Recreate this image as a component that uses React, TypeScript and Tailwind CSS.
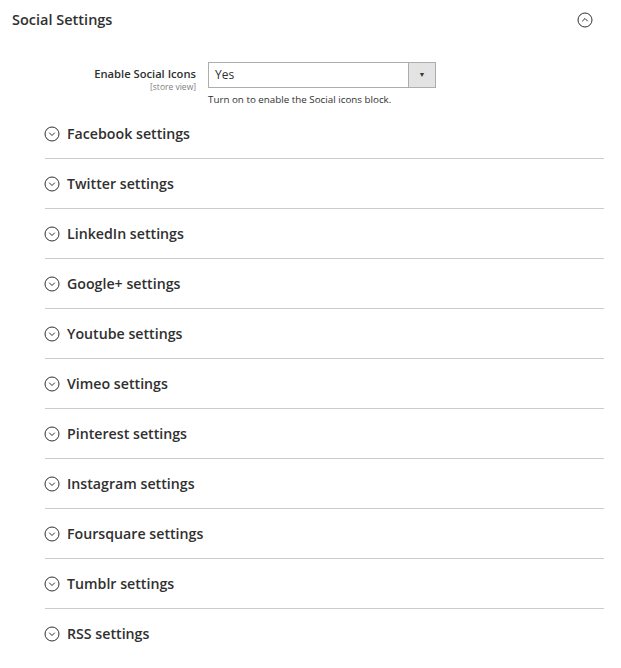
import React from 'react';

const sections = [
  'Facebook settings',
  'Twitter settings',
  'LinkedIn settings',
  'Google+ settings',
  'Youtube settings',
  'Vimeo settings',
  'Pinterest settings',
  'Instagram settings',
  'Foursquare settings',
  'Tumblr settings',
  'RSS settings',
];

function CircleChevron({ up = false, className = '' }: { up?: boolean; className?: string }) {
  return (
    <svg className={className} width="16" height="16" viewBox="0 0 16 16" fill="none" stroke="#303030" strokeWidth="1">
      <circle cx="8" cy="8" r="7" />
      {up ? (
        <polyline points="5.5,9 8,6.5 10.5,9" strokeLinecap="round" strokeLinejoin="round" />
      ) : (
        <polyline points="5.5,7 8,9.5 10.5,7" strokeLinecap="round" strokeLinejoin="round" />
      )}
    </svg>
  );
}

function App() {
  return (
    <div className="w-[621px] min-h-[668px] bg-white text-[#303030] font-['Open_Sans',sans-serif]">
      <div className="flex items-center justify-between h-10 pl-3 pr-[28px]">
        <h2 className="text-[14.5px] font-semibold leading-[22px]">Social Settings</h2>
        <CircleChevron up />
      </div>

      <div className="flex mt-[22px]">
        <div className="w-[196px] text-right pt-[4px]">
          <div className="text-[11.2px] font-semibold leading-[16px]">Enable Social Icons</div>
          <div className="text-[8.5px] text-[#808080] leading-[10px]">[store view]</div>
        </div>
        <div className="ml-3">
          <div className="flex w-[228px] h-[26px] border border-[#adadad] bg-white">
            <div className="flex-1 flex items-center pl-[6px] text-[12px]">Yes</div>
            <div className="w-[27px] flex items-center justify-center bg-[#e3e3e3] border-l border-[#adadad] text-[7px] text-[#41362f]">
              ▼
            </div>
          </div>
          <div className="text-[9.8px] leading-[14px] mt-[5px]">Turn on to enable the Social icons block.</div>
        </div>
      </div>

      <div className="ml-[45px] w-[559px] mt-[2px]">
        {sections.map((s, i) => (
          <div
            key={s}
            className={
              'flex items-center gap-[7px] h-[50px] ' +
              (i < sections.length - 1 ? 'border-b border-[#cccccc]' : '')
            }
          >
            <CircleChevron className="-ml-px" />
            <span className="text-[14.2px] font-semibold">{s}</span>
          </div>
        ))}
      </div>
    </div>
  );
}

export default App;
